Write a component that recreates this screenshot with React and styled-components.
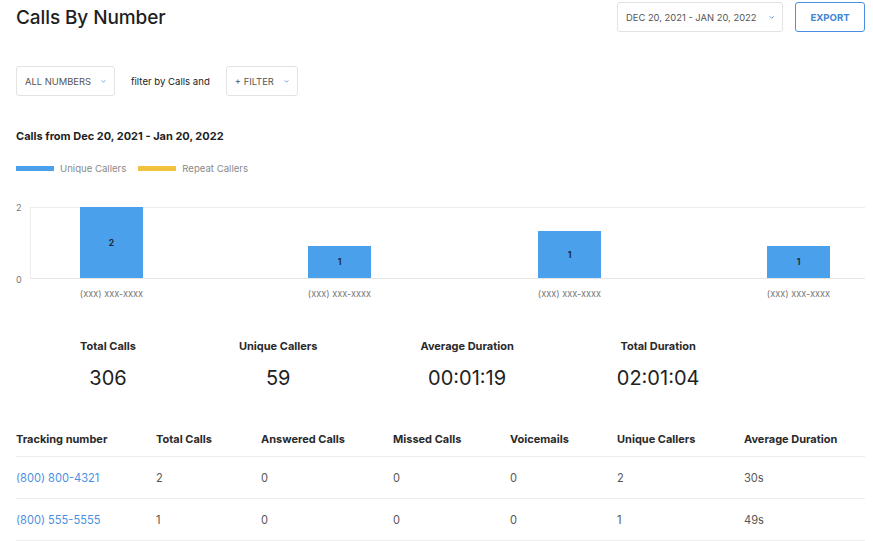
import React from 'react';
import styled, { createGlobalStyle } from 'styled-components';

const GlobalStyle = createGlobalStyle`
  body {
    margin: 0;
    background: #ffffff;
    font-family: Inter, "Noto Sans", sans-serif;
    color: #222;
  }
`;

const Page = styled.div`
  width: 873px;
  padding: 0 8px 0 16px;
  box-sizing: border-box;
`;

const Header = styled.div`
  display: flex;
  align-items: center;
  justify-content: space-between;
  height: 30px;
  padding-top: 2px;
`;

const Title = styled.h1`
  margin: 0;
  font-size: 19px;
  font-weight: 500;
  color: #1f1f1f;
  letter-spacing: -0.1px;
`;

const HeaderActions = styled.div`
  display: flex;
  align-items: center;
  gap: 12px;
`;

const Dropdown = styled.button`
  display: flex;
  align-items: center;
  gap: ${p => p.gap || 10}px;
  height: 30px;
  width: ${p => p.width}px;
  padding: 0 8px;
  box-sizing: border-box;
  background: #fff;
  border: 1px solid #e3e3e3;
  border-radius: 3px;
  font-family: inherit;
  font-size: 9.4px;
  color: #555;
  text-transform: uppercase;
  white-space: nowrap;
`;

const ExportButton = styled.button`
  height: 30px;
  width: 70px;
  background: #fff;
  border: 1px solid #4a8fe0;
  border-radius: 3px;
  font-family: inherit;
  font-size: 9.6px;
  font-weight: 700;
  color: #3f86d8;
`;

const FilterRow = styled.div`
  display: flex;
  align-items: center;
  margin-top: 34px;
  gap: 16px;
`;

const FilterText = styled.span`
  font-size: 9.6px;
  color: #222;
`;

const Caption = styled.div`
  margin-top: 33px;
  font-size: 11px;
  line-height: 14px;
  font-weight: 700;
  color: #1f1f1f;
`;

const Legend = styled.div`
  display: flex;
  align-items: center;
  margin-top: 20px;
  height: 10px;
  gap: 12px;
`;

const LegendItem = styled.div`
  display: flex;
  align-items: center;
  gap: 6px;
  font-size: 9.6px;
  color: #8a8a8a;
`;

const Swatch = styled.span`
  width: 38px;
  height: 5px;
  background: ${p => p.color};
`;

const ChartWrap = styled.div`
  margin-top: 27px;
  height: 100px;
`;

const Stats = styled.div`
  display: flex;
  gap: 103px;
  padding-left: 64px;
  margin-top: 39px;
`;

const Stat = styled.div`
  display: flex;
  flex-direction: column;
  align-items: center;
  gap: 13px;
`;

const StatLabel = styled.div`
  font-size: 11px;
  line-height: 14px;
  font-weight: 700;
  color: #2a2a2a;
`;

const StatValue = styled.div`
  font-size: 20px;
  line-height: 24px;
  color: #222;
`;

const Table = styled.div`
  margin-top: 32px;
  width: 849px;
`;

const Row = styled.div`
  display: grid;
  grid-template-columns: 140px 105px 132px 117px 107px 127px 1fr;
  align-items: center;
  height: ${p => (p.head ? 34 : 41)}px;
  border-bottom: 1px solid #ececec;
`;

const HeadCell = styled.div`
  font-size: 11px;
  font-weight: 700;
  color: #2a2a2a;
`;

const Cell = styled.div`
  font-size: 11.1px;
  color: ${p => (p.link ? '#4a90e2' : '#555')};
`;

const Chevron = () => (
  <svg width="9" height="7" viewBox="0 0 9 7">
    <path d="M1.8 2 L4.5 4.8 L7.2 2" fill="none" stroke="#4a90e2" strokeWidth="1.5" strokeLinecap="round" strokeLinejoin="round" />
  </svg>
);

const bars = [
  { x: 64, top: 7, value: 2 },
  { x: 292, top: 46, value: 1 },
  { x: 522, top: 31, value: 1 },
  { x: 751, top: 46, value: 1 },
];

const BarChart = () => (
  <svg width="849" height="100" viewBox="0 0 849 100" fontFamily="Inter, sans-serif">
    <line x1="14" y1="7.5" x2="849" y2="7.5" stroke="#ececec" strokeWidth="1" />
    <line x1="14" y1="78.5" x2="849" y2="78.5" stroke="#e4e4e4" strokeWidth="1" />
    <line x1="14.5" y1="7" x2="14.5" y2="79" stroke="#ececec" strokeWidth="1" />
    <text x="0" y="10.5" fontSize="9" fill="#777">2</text>
    <text x="0" y="82.5" fontSize="9" fill="#777">0</text>
    {bars.map((b, i) => (
      <g key={i}>
        <rect x={b.x} y={b.top} width="63" height={78 - b.top} fill="#4aa0ea" />
        <text x={b.x + 31.5} y={(b.top + 78) / 2 + 3} fontSize="8.6" fontWeight="700" fill="#1a2b3c" textAnchor="middle">{b.value}</text>
        <text x={b.x + 31.5} y="97" fontSize="9.2" fill="#777" textAnchor="middle">(xxx) xxx-xxxx</text>
      </g>
    ))}
  </svg>
);

const stats = [
  { label: 'Total Calls', value: '306' },
  { label: 'Unique Callers', value: '59' },
  { label: 'Average Duration', value: '00:01:19' },
  { label: 'Total Duration', value: '02:01:04' },
];

const columns = ['Tracking number', 'Total Calls', 'Answered Calls', 'Missed Calls', 'Voicemails', 'Unique Callers', 'Average Duration'];

const rows = [
  ['(800) 800-4321', '2', '0', '0', '0', '2', '30s'],
  ['(800) 555-5555', '1', '0', '0', '0', '1', '49s'],
];

export default function App() {
  return (
    <Page>
      <GlobalStyle />
      <Header>
        <Title>Calls By Number</Title>
        <HeaderActions>
          <Dropdown width={166} gap={12}>DEC 20, 2021 - JAN 20, 2022 <Chevron /></Dropdown>
          <ExportButton>EXPORT</ExportButton>
        </HeaderActions>
      </Header>

      <FilterRow>
        <Dropdown width={99}>ALL NUMBERS <Chevron /></Dropdown>
        <FilterText>filter by Calls and</FilterText>
        <Dropdown width={72}>+ FILTER <Chevron /></Dropdown>
      </FilterRow>

      <Caption>Calls from Dec 20, 2021 - Jan 20, 2022</Caption>

      <Legend>
        <LegendItem><Swatch color="#4aa0ea" />Unique Callers</LegendItem>
        <LegendItem><Swatch color="#f0c23e" />Repeat Callers</LegendItem>
      </Legend>

      <ChartWrap>
        <BarChart />
      </ChartWrap>

      <Stats>
        {stats.map(s => (
          <Stat key={s.label}>
            <StatLabel>{s.label}</StatLabel>
            <StatValue>{s.value}</StatValue>
          </Stat>
        ))}
      </Stats>

      <Table>
        <Row head>
          {columns.map(c => <HeadCell key={c}>{c}</HeadCell>)}
        </Row>
        {rows.map(r => (
          <Row key={r[0]}>
            {r.map((v, i) => <Cell key={i} link={i === 0}>{v}</Cell>)}
          </Row>
        ))}
      </Table>
    </Page>
  );
}
